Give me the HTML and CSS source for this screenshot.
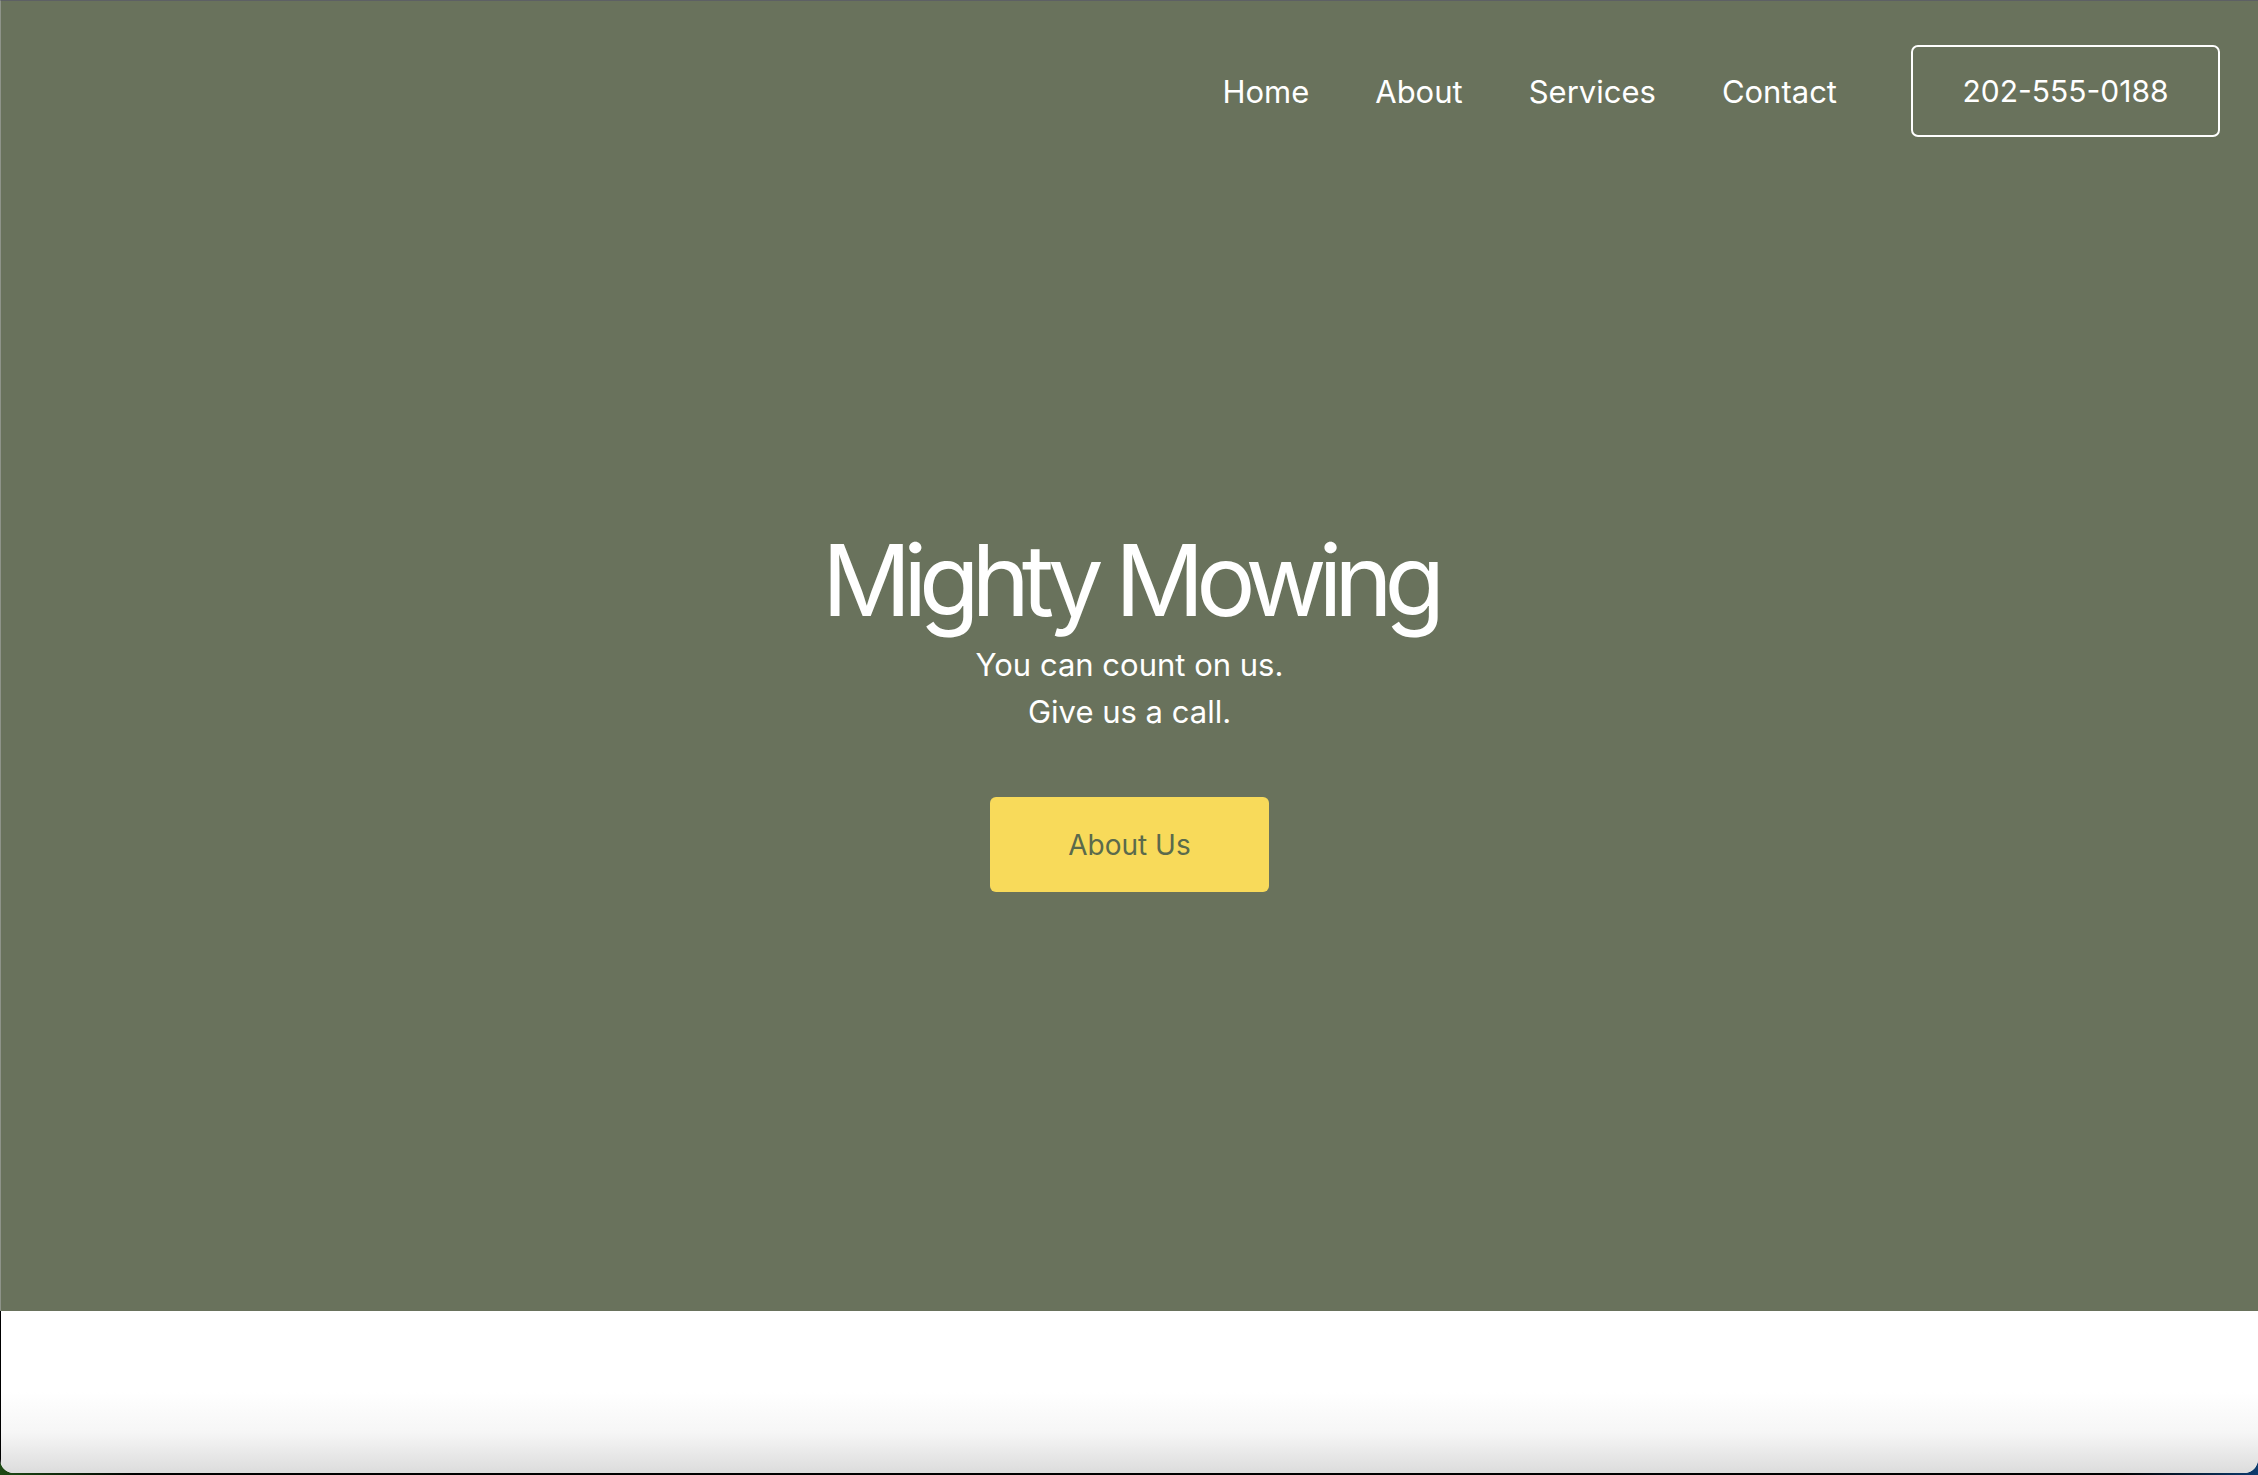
FILE: index.html
```html
<!DOCTYPE html>
<html lang="en">
<head>
<meta charset="utf-8">
<title>Mighty Mowing</title>
<link rel="stylesheet" href="styles.css">
</head>
<body>
<div class="window">
  <section class="hero">
    <header class="site-header">
      <nav class="nav">
        <a class="nav-link" href="#">Home</a>
        <a class="nav-link" href="#">About</a>
        <a class="nav-link" href="#">Services</a>
        <a class="nav-link" href="#">Contact</a>
      </nav>
      <a class="phone-btn" href="#">202-555-0188</a>
    </header>
    <div class="hero-body">
      <h1 class="hero-title">Mighty Mowing</h1>
      <p class="hero-sub">You can count on us.<br>Give us a call.</p>
      <a class="cta" href="#">About Us</a>
    </div>
  </section>
  <section class="below"></section>
</div>
</body>
</html>
```

FILE: styles.css
```css
* { box-sizing: border-box; }
html, body { margin: 0; padding: 0; }
body {
  width: 2258px;
  height: 1475px;
  overflow: hidden;
  background: linear-gradient(90deg, #1d4a14 0%, #000 6%, #000 94%, #0c3b6e 100%);
  font-family: "Inter", "DejaVu Sans", sans-serif;
}
.window {
  height: 1473px;
  border-radius: 0 0 14px 14px;
  overflow: hidden;
  background: #fff;
  display: flex;
  flex-direction: column;
}
.hero {
  height: 1311px;
  background: #69725c;
  border-top: 1px solid #5d6064;
  border-left: 1px solid #8e9389;
  display: flex;
  flex-direction: column;
}
.site-header {
  display: flex;
  justify-content: flex-end;
  align-items: center;
  padding: 44px 38px 0 0;
}
.nav {
  display: flex;
  gap: 66px;
  margin-right: 74px;
}
.nav-link {
  color: #fff;
  text-decoration: none;
  font-size: 31px;
}
.phone-btn {
  width: 309px;
  height: 92px;
  border: 2px solid #fff;
  border-radius: 7px;
  color: #fff;
  text-decoration: none;
  font-size: 30px;
  display: flex;
  align-items: center;
  justify-content: center;
}
.hero-body {
  display: flex;
  flex-direction: column;
  align-items: center;
  padding-top: 394px;
}
.hero-title {
  margin: 0;
  color: #fff;
  font-weight: 400;
  font-size: 99px;
  line-height: 1;
  letter-spacing: -8.2px;
}
.hero-sub {
  margin: 11px 0 0;
  color: #fff;
  font-size: 31px;
  line-height: 47px;
  text-align: center;
}
.cta {
  margin-top: 62px;
  width: 279px;
  height: 95px;
  background: #f8da5a;
  border-radius: 6px;
  color: #5b6a4c;
  text-decoration: none;
  font-size: 28px;
  display: flex;
  align-items: center;
  justify-content: center;
}
.below {
  flex: 1;
  border-left: 1px solid #000;
  background: linear-gradient(180deg, #fff 0%, #fff 50%, #f6f6f6 75%, #dcdcdc 100%);
}
```
